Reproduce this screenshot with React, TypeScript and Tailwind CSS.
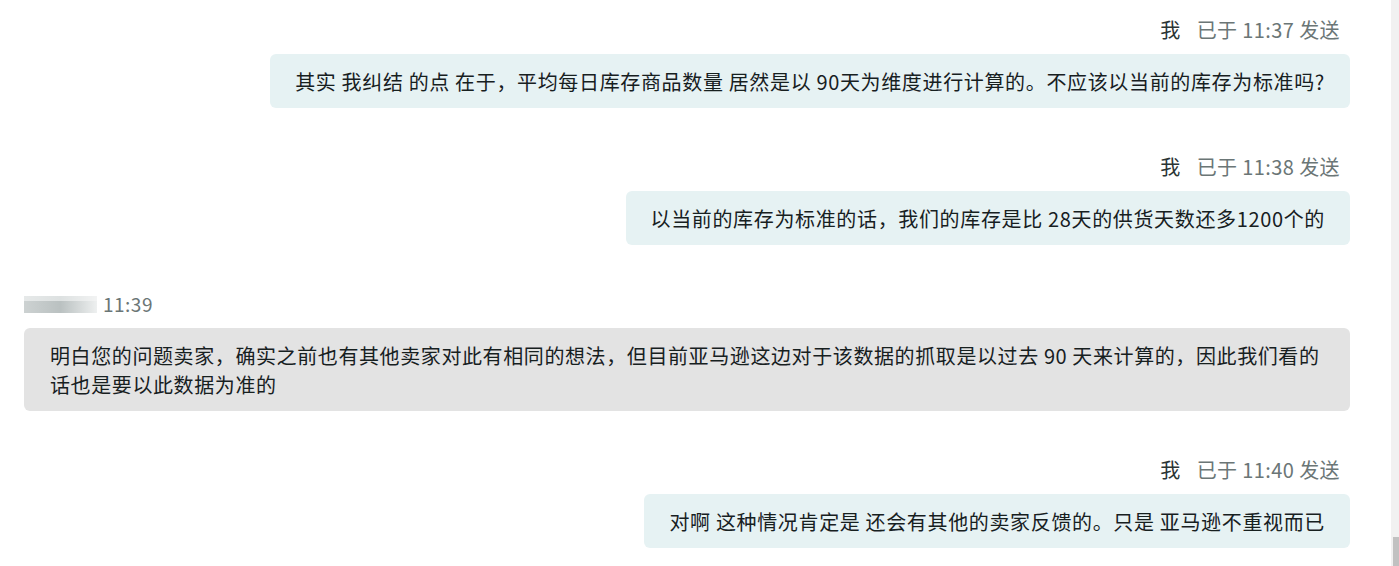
const font = { fontFamily: '"Noto Sans CJK SC", "Noto Sans", sans-serif' };

type Msg = {
  mine: boolean;
  time: string;
  text: string;
};

const messages: Msg[] = [
  {
    mine: true,
    time: "11:37",
    text: "其实 我纠结 的点 在于，平均每日库存商品数量 居然是以 90天为维度进行计算的。不应该以当前的库存为标准吗?",
  },
  {
    mine: true,
    time: "11:38",
    text: "以当前的库存为标准的话，我们的库存是比 28天的供货天数还多1200个的",
  },
  {
    mine: false,
    time: "11:39",
    text: "明白您的问题卖家，确实之前也有其他卖家对此有相同的想法，但目前亚马逊这边对于该数据的抓取是以过去 90 天来计算的，因此我们看的话也是要以此数据为准的",
  },
  {
    mine: true,
    time: "11:40",
    text: "对啊 这种情况肯定是 还会有其他的卖家反馈的。只是 亚马逊不重视而已",
  },
];

function Message({ msg }: { msg: Msg }) {
  if (msg.mine) {
    return (
      <div className="flex flex-col items-end">
        <div className="flex h-[26px] items-center pr-[10px] text-[20px] tracking-[0.4px]">
          <span className="mr-[16px] text-[#2a3434]">我</span>
          <span className="text-[#6b7676]">已于 {msg.time} 发送</span>
        </div>
        <div className="mt-[11px] rounded-md bg-[#e6f2f3] px-[25px] py-[12.5px] text-[20px] leading-[29px] tracking-[0.65px] text-[#17201f]">
          {msg.text}
        </div>
      </div>
    );
  }
  return (
    <div className="flex flex-col items-stretch">
      <div className="flex h-[26px] items-center">
        <div className="flex h-[17px] w-[73px] flex-col blur-[0.6px]">
          <div className="h-[5px] bg-gradient-to-r from-[#e6e9e9] via-[#dde1e1] to-[#f2f3f3]" />
          <div className="h-[12px] bg-gradient-to-r from-[#cdd2d2] via-[#bac1c1] to-[#eef0f0]" />
        </div>
        <span className="ml-[6px] text-[19px] tracking-[0.5px] text-[#6b7676]">{msg.time}</span>
      </div>
      <div className="mt-[11px] rounded-md bg-[#e3e3e3] px-[26px] py-[12.5px] text-[20px] leading-[29px] tracking-[0.6px] text-[#17201f]">
        {msg.text}
      </div>
    </div>
  );
}

export default function App() {
  return (
    <div className="flex h-[566px] w-full overflow-hidden bg-white" style={font}>
      <div className="flex flex-1 flex-col gap-[46px] pl-6 pr-[41px] pt-[17px]">
        {messages.map((m, i) => (
          <Message key={i} msg={m} />
        ))}
      </div>
      <div className="flex w-[8px] flex-col justify-end bg-[#f1f1f1]">
        <div className="ml-[2px] h-[29px] w-[6px] bg-[#c1c1c1]" />
      </div>
    </div>
  );
}
